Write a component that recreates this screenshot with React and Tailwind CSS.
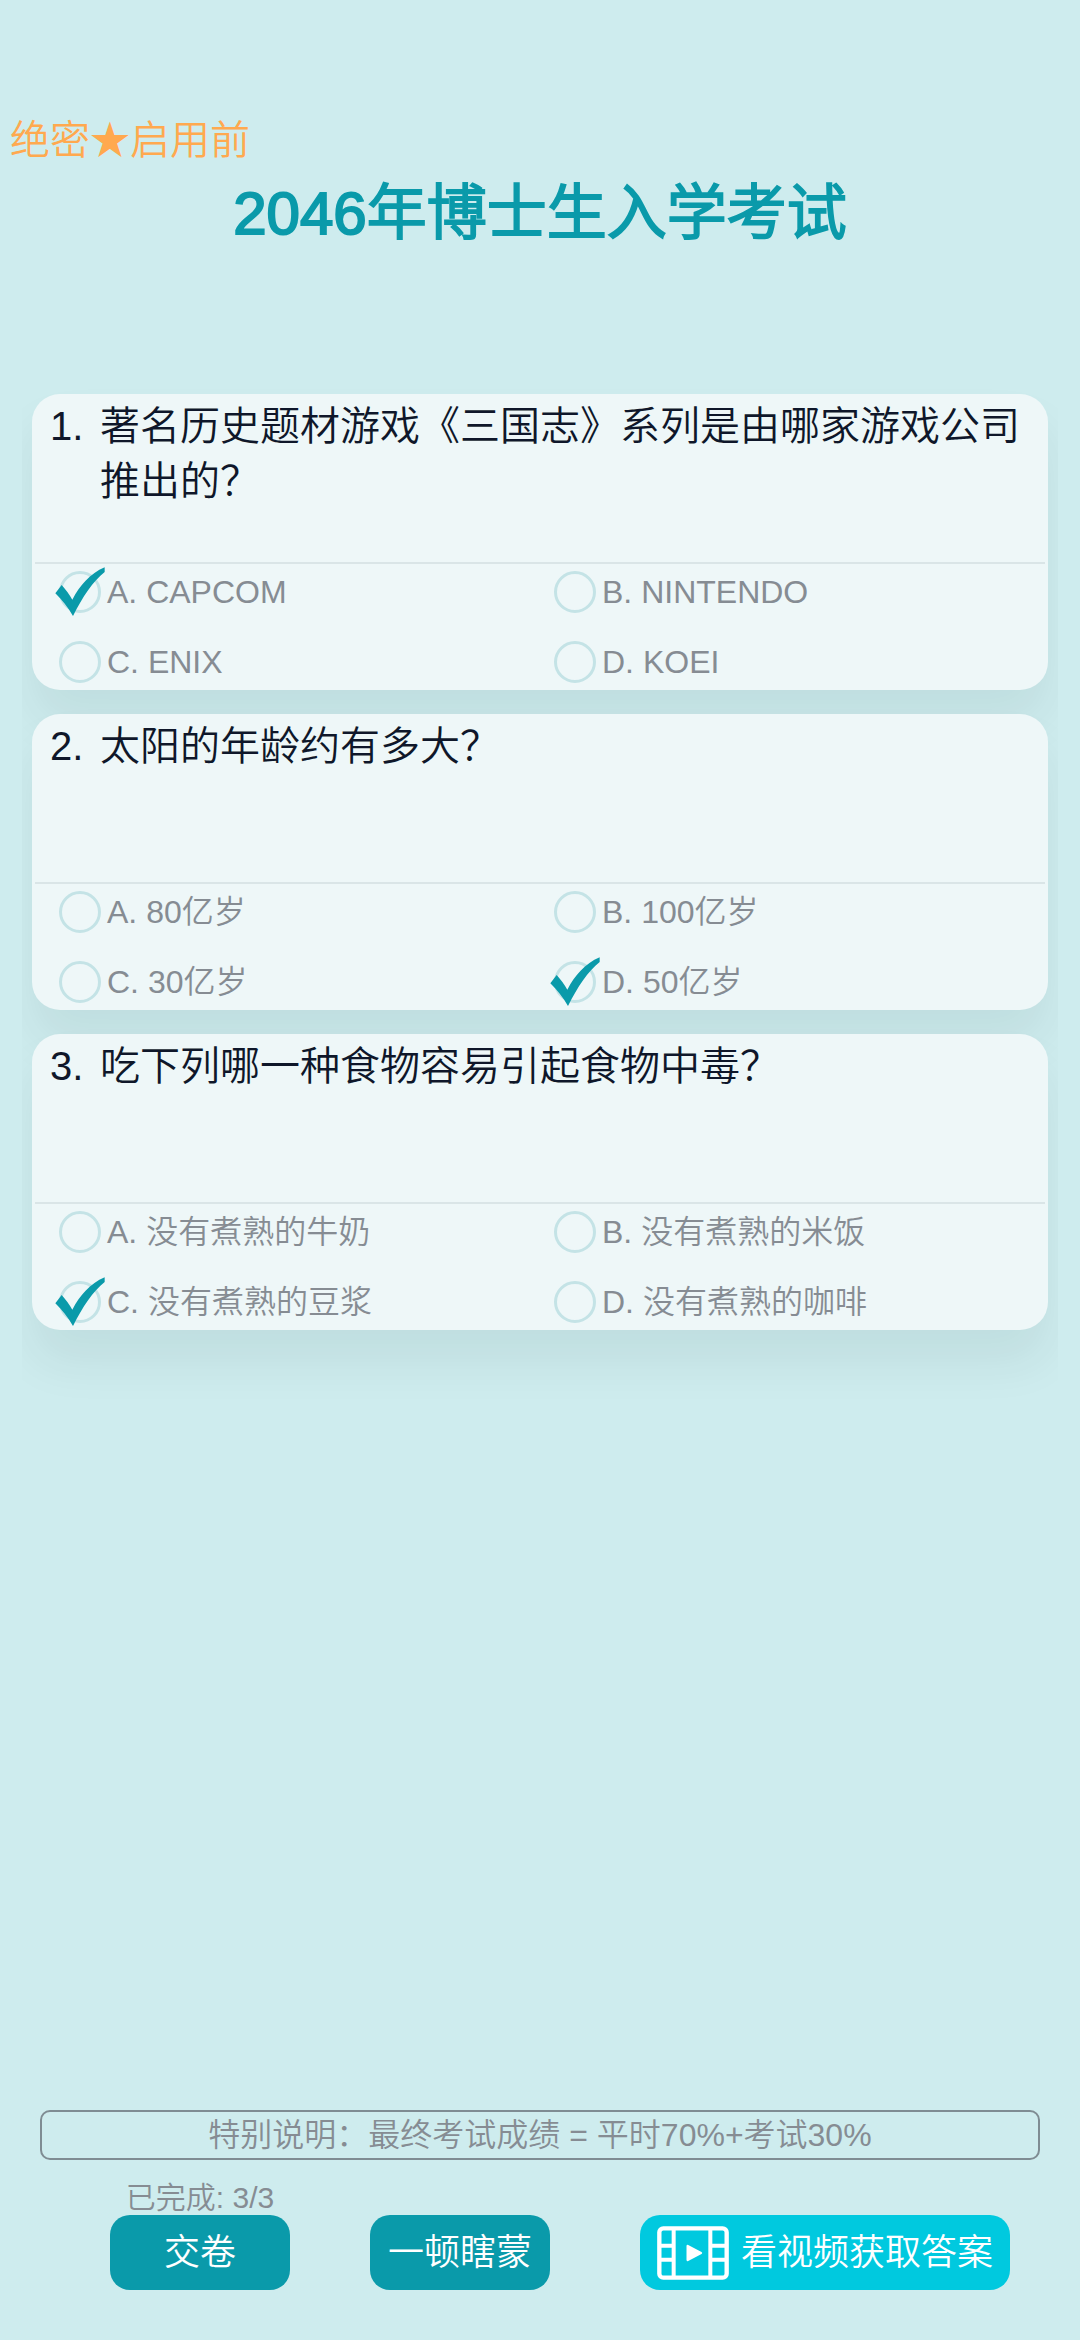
/**
 * App.jsx — Exam page
 *
 * Shows the paper header, the list of single-choice questions and
 * the bottom bar with the submit / guess / watch-video actions.
 */

import { useState } from 'react';

const LETTERS = ['A', 'B', 'C', 'D'];

const QUESTIONS = [
  {
    id: 1,
    title: '著名历史题材游戏《三国志》系列是由哪家游戏公司推出的？',
    options: ['CAPCOM', 'NINTENDO', 'ENIX', 'KOEI'],
  },
  {
    id: 2,
    title: '太阳的年龄约有多大？',
    options: ['80亿岁', '100亿岁', '30亿岁', '50亿岁'],
  },
  {
    id: 3,
    title: '吃下列哪一种食物容易引起食物中毒？',
    options: ['没有煮熟的牛奶', '没有煮熟的米饭', '没有煮熟的豆浆', '没有煮熟的咖啡'],
  },
];

const CheckMark = () => (
  <svg
    viewBox="0 0 150 150"
    className="absolute -inset-1 w-[50px] h-[50px] pointer-events-none"
    aria-hidden="true"
  >
    <path
      d="M149 1V15C115 42 82 90 54 147C40 122 20 98 1 79L20 54C32 68 43 82 52 98C75 55 105 20 149 1Z"
      fill="#0a9aaa"
    />
  </svg>
);

const FilmIcon = () => (
  <svg viewBox="0 0 216 162" className="w-[72px] h-[54px] shrink-0" aria-hidden="true">
    <rect x="7" y="7" width="202" height="148" rx="12" fill="none" stroke="#fff" strokeWidth="13" />
    <path
      d="M50 7V155M160 7V155M7 59H50M7 101H50M160 59H209M160 101H209"
      fill="none"
      stroke="#fff"
      strokeWidth="12"
    />
    <path d="M92 60L132 81L92 102Z" fill="#fff" stroke="#fff" strokeWidth="7" strokeLinejoin="round" />
  </svg>
);

const Option = ({ name, letter, text, checked, onSelect }) => (
  <label className="flex items-center gap-1.5 h-14 pl-3.5 text-[32px] leading-10 text-[#868c93] cursor-pointer">
    <span className="relative w-[42px] h-[42px] shrink-0">
      <input
        type="radio"
        name={name}
        checked={checked}
        onChange={onSelect}
        className="appearance-none block w-full h-full rounded-full border-3 border-[#c4e3e6]"
      />
      {checked && <CheckMark />}
    </span>
    <span>{letter}. {text}</span>
  </label>
);

const QuestionCard = ({ question, answer, onAnswer }) => (
  <li className="rounded-[28px] bg-[#eef7f8] shadow-[0_32px_48px_rgba(0,40,40,0.07)]">
    {/* Question text */}
    <div className="flex min-h-[168px] pl-[18px] pr-5 pt-[5px] text-[40px] leading-[55px] text-[#0f172a]">
      <span className="w-[50px] shrink-0">{question.id}.</span>
      <h2>{question.title}</h2>
    </div>

    {/* Options */}
    <div className="mx-[3px] border-t-2 border-[#dae5e7]" />
    <div className="grid grid-cols-2 gap-y-3.5 px-[13px]">
      {question.options.map((text, i) => (
        <Option
          key={text}
          name={`question-${question.id}`}
          letter={LETTERS[i]}
          text={text}
          checked={answer === i}
          onSelect={() => onAnswer(i)}
        />
      ))}
    </div>
  </li>
);

const App = () => {
  const [answers, setAnswers] = useState({ 1: 0, 2: 3, 3: 2 });

  const handleAnswer = (id, index) => {
    setAnswers(prev => ({ ...prev, [id]: index }));
  };

  // Pick a random option for every question
  const handleGuess = () => {
    const next = {};
    QUESTIONS.forEach(q => {
      next[q.id] = Math.floor(Math.random() * q.options.length);
    });
    setAnswers(next);
  };

  return (
    <div className="min-h-screen flex flex-col bg-[#ceecee] font-[350] font-['Liberation_Sans','Noto_Sans_CJK_SC',sans-serif]">

      {/* Paper header */}
      <header className="pt-[110px]">
        <p className="pl-2.5 text-[40px] leading-[60px] text-[#ffa94f]">绝密★启用前</p>
        <h1 className="pt-1 text-center text-[60px] leading-[80px] text-[#0a9aaa] [-webkit-text-stroke:2px_#0a9aaa]">
          2046年博士生入学考试
        </h1>
      </header>

      {/* Questions */}
      <main className="mt-[120px] mx-[22px] px-2.5 pt-5 pb-20 overflow-hidden">
        <ol className="flex flex-col gap-6">
          {QUESTIONS.map(q => (
            <QuestionCard
              key={q.id}
              question={q}
              answer={answers[q.id]}
              onAnswer={(index) => handleAnswer(q.id, index)}
            />
          ))}
        </ol>
      </main>

      {/* Bottom: note + actions */}
      <footer className="mt-auto pb-[50px]">
        <p className="mx-10 h-[50px] flex items-center justify-center rounded-[10px] border-2 border-[#7f8c93] text-[32px] text-[#868c93]">
          特别说明：最终考试成绩 = 平时70%+考试30%
        </p>
        <div className="mt-5 flex items-end gap-20 pl-[110px] pr-[70px] text-[36px] text-white">
          <div className="w-[180px] flex flex-col items-center">
            <p className="text-[30px] leading-[35px] text-[#868c93]">
              已完成: {Object.keys(answers).length}/{QUESTIONS.length}
            </p>
            <button type="button" className="w-full h-[75px] rounded-[20px] bg-[#0a9aaa]">
              交卷
            </button>
          </div>
          <button
            type="button"
            onClick={handleGuess}
            className="w-[180px] h-[75px] rounded-[20px] bg-[#0a9aaa]"
          >
            一顿瞎蒙
          </button>
          <button
            type="button"
            className="ml-auto w-[370px] h-[75px] flex items-center justify-center gap-3 rounded-[20px] bg-[#00c9df]"
          >
            <FilmIcon />
            看视频获取答案
          </button>
        </div>
      </footer>
    </div>
  );
};

export default App;
